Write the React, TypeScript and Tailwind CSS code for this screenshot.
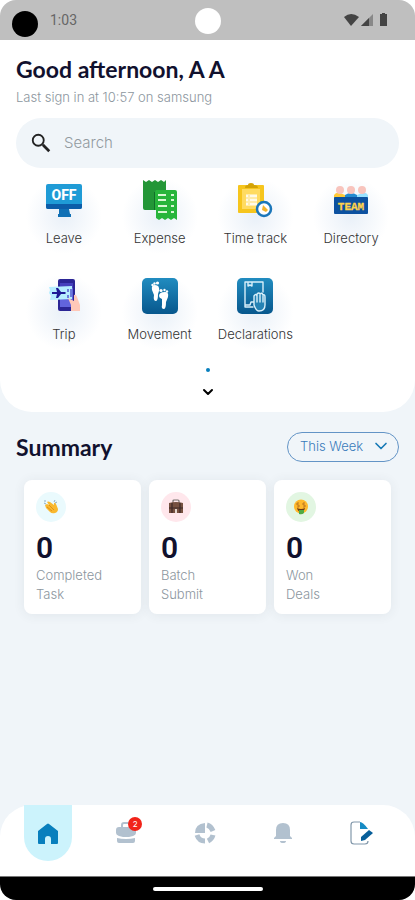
import React from 'react';
import { ChevronDown } from 'lucide-react';

const LeaveIcon = () => (
  <svg viewBox="0 0 40 40" className="h-10 w-10">
    <path d="M15 29h10l1 5h1v3H14v-3h1z" fill="#1070b5" />
    <rect x="2" y="4" width="36" height="25" rx="2" fill="#1f9bd6" />
    <path d="M2 24h36v3a2 2 0 0 1-2 2H4a2 2 0 0 1-2-2z" fill="#0c5da8" />
    <text x="20" y="20" textAnchor="middle" fontSize="14" fontWeight="800" fill="#fff" className="font-[Roboto,sans-serif]">OFF</text>
  </svg>
);

const ExpenseIcon = () => (
  <svg viewBox="0 0 40 40" className="h-10 w-10">
    <path d="M3 0l3 2 3-2 3 2 3-2 3 2 3-2 3 2 2-2v30H5a2 2 0 0 1-2-2z" fill="#239637" />
    <path d="M14 12h12v18H14z" fill="#12702a" />
    <path d="M16 10h19a2 2 0 0 1 2 2v28l-3-2-3 2-3-2-3 2-3-2-3 2-3-2V30h-1V12z" fill="#27b53b" />
    <path d="M18 15h8M18 20h8M18 26h9M18 32h9M31 15h3M31 20h3M31 26h3M31 32h3" stroke="#d8f7d4" strokeWidth="2" />
  </svg>
);

const TimeTrackIcon = () => (
  <svg viewBox="0 0 40 40" className="h-10 w-10">
    <rect x="3" y="5" width="26" height="28" rx="1" fill="#f6c51d" />
    <path d="M7 9h18v20H7z" fill="#ffdb61" />
    <path d="M10 8q0-3 3-3 0-2 3-2t3 2q4 0 4 3z" fill="#d4a306" />
    <path d="M11 14h11v12H11z" fill="#ffebaa" />
    <path d="M11 16h2M15 16h7M11 20h2M15 20h7M11 24h2M15 24h7" stroke="#fffae8" strokeWidth="2" />
    <circle cx="29" cy="29" r="7" fill="#fff" stroke="#1b76b9" strokeWidth="2.5" />
    <path d="M28 25l5 5-2 2-4-2z" fill="#f4b42b" />
  </svg>
);

const DirectoryIcon = () => (
  <svg viewBox="0 0 40 40" className="h-10 w-10">
    <path d="M3 18v-3q2-3 6-2l5 2v3z" fill="#ffc938" />
    <path d="M14 18v-3q6-4 12 0v3z" fill="#258bd0" />
    <path d="M26 18v-3l5-2q4-1 6 2v3z" fill="#99e1ff" />
    <circle cx="9" cy="10" r="4" fill="#f8c4bd" />
    <circle cx="20" cy="10" r="4" fill="#f8c4bd" />
    <circle cx="31" cy="10" r="4" fill="#f8c4bd" />
    <rect x="3" y="17" width="34" height="17" rx="1" fill="#0c51a0" />
    <text x="20" y="30" textAnchor="middle" fontSize="11" fontWeight="700" fill="#ffd34b" stroke="#ffd34b" strokeWidth=".3" className="font-['Liberation_Mono',monospace]">TEAM</text>
  </svg>
);

const TripIcon = () => (
  <svg viewBox="0 0 40 40" className="h-10 w-10">
    <rect x="14" y="3" width="17" height="32" rx="2" fill="#2b2595" />
    <path d="M16 7h13v24H16z" fill="#6264dd" />
    <path d="M16 7h13v5H16z" fill="#4540bd" />
    <path d="M5 11l23-1v13L6 24l1-4-2-3 1-3z" fill="#b6edff" />
    <path d="M8 16h5l-1-4h2l3 4h4l1 1-1 1h-4l-3 4h-2l1-4H8z" fill="#1d1995" />
    <path d="M24 13v3M24 19v3M27 13v8" stroke="#5558cd" strokeWidth="1.5" />
    <path d="M24 22l6 3V19q2-1 3 2l3 8v6H27v-6z" fill="#ffc8b8" />
  </svg>
);

const MovementIcon = () => (
  <svg viewBox="0 0 40 40" className="h-10 w-10">
    <defs>
      <linearGradient id="movement-bg" x1="0" y1="0" x2="0" y2="1">
        <stop stopColor="#218cc0" />
        <stop offset="1" stopColor="#07578d" />
      </linearGradient>
    </defs>
    <rect x="2" y="2" width="36" height="36" rx="5" fill="url(#movement-bg)" />
    <g fill="#fff">
      <path d="M12 14q-1-5 3-5 5 0 4 6l-1 3q0 7-2 7-3 0-2-6z" />
      <path d="M28 21q1-5-3-5-6 0-6 4 0 2 3 3v6q-1 4 2 4 2 0 2-7z" />
      <circle cx="12.5" cy="9" r="1.2" />
      <circle cx="14.5" cy="7.5" r="1.2" />
      <circle cx="17.5" cy="7" r="1.6" />
      <circle cx="21" cy="14.5" r="1.6" />
      <circle cx="24.5" cy="14" r="1.2" />
      <circle cx="27" cy="15.5" r="1.2" />
    </g>
  </svg>
);

const DeclarationsIcon = () => (
  <svg viewBox="0 0 40 40" className="h-10 w-10">
    <defs>
      <linearGradient id="declarations-bg" x1="0" y1="0" x2="0" y2="1">
        <stop stopColor="#218cc0" />
        <stop offset="1" stopColor="#07578d" />
      </linearGradient>
    </defs>
    <rect x="2" y="2" width="36" height="36" rx="5" fill="url(#declarations-bg)" />
    <g fill="none" stroke="#d8effa" strokeWidth="1.4" strokeLinecap="round" strokeLinejoin="round">
      <path d="M28 16V6H10v25h8M13 6v4l2-1 2 1V6M11 29h4l1-3h4" />
      <path d="M19 29v-9q2-3 3 0v-2q2-2 3 0 2-2 3 1 2-1 2 2v8q0 6-6 6-3 0-5-6zM22 20v6M25 19v7M28 20v6" fill="#2582b4" />
    </g>
  </svg>
);

const HomeIcon = () => (
  <svg viewBox="0 0 24 24" className="h-6 w-6" fill="#087fbd">
    <path d="M2 10l9-7q1-1 2 0l9 7v12q0 1-1 1h-6v-5q0-3-3-3t-3 3v5H3q-1 0-1-1z" />
  </svg>
);

const BriefcaseIcon = () => (
  <svg viewBox="0 0 24 24" className="h-6 w-6" fill="#b2c1cf">
    <path d="M7 6V4q0-3 3-3h4q3 0 3 3v2h2q3 0 3 3v3q0 2-3 3l-4 1H9l-4-1q-3-1-3-3V9q0-3 3-3zm2 0h6V4q0-1-1-1h-4q-1 0-1 1z" />
    <path d="M3 17q4 1 9 1t9-1v3q0 2-2 2H5q-2 0-2-2z" />
  </svg>
);

const ChartIcon = () => (
  <svg viewBox="0 0 24 24" className="h-6 w-6">
    <path d="M12 2v10H2q0-9 10-10z" fill="#b2c1cf" />
    <g fill="none" stroke="#b2c1cf" strokeWidth="5">
      <path d="M14 4q4 1 6 6" />
      <path d="M20 14q-1 4-5 6" />
      <path d="M12 20q-6 0-8-6" />
    </g>
  </svg>
);

const BellIcon = () => (
  <svg viewBox="0 0 24 24" className="h-6 w-6" fill="#b2c1cf">
    <path d="M5 15V9q0-7 7-7t7 7v6l2 2v1H3v-1zM9 20h6q0 2-3 2t-3-2z" />
  </svg>
);

const NoteIcon = () => (
  <svg viewBox="0 0 24 24" className="h-6 w-6" fill="none">
    <path d="M11 1H5Q2 1 2 4v16q0 3 3 3h11q3 0 3-3" stroke="#8298ab" strokeWidth="1.2" />
    <path d="M11 1q3 0 8 7h-8z" fill="#168bc4" />
    <path d="M12 20v-4l8-7 4 3-8 7z" fill="#075f9a" />
  </svg>
);

const apps = [
  { name: 'Leave', icon: <LeaveIcon /> },
  { name: 'Expense', icon: <ExpenseIcon /> },
  { name: 'Time track', icon: <TimeTrackIcon /> },
  { name: 'Directory', icon: <DirectoryIcon /> },
  { name: 'Trip', icon: <TripIcon /> },
  { name: 'Movement', icon: <MovementIcon /> },
  { name: 'Declarations', icon: <DeclarationsIcon /> },
];

const ClapIcon = () => (
  <svg viewBox="0 0 16 16" className="h-4 w-4">
    <path d="M2 6l2-1 2 1-2-3q1-1 3 0l4 3V4q1-1 2 1l2 5q0 3-3 4t-5-1L3 9z" fill="#f9b82e" />
    <path d="M4 8l5 4M6 6l5 5" stroke="#d98513" strokeWidth=".8" />
    <path d="M2 1v2M1 4l2 1M12 1l-1 2M14 3l-2 1" stroke="#8cacc3" />
  </svg>
);

const BagIcon = () => (
  <svg viewBox="0 0 16 16" className="h-4 w-4">
    <path d="M5 4V2q0-1 1-1h4q1 0 1 1v2" fill="none" stroke="#77716d" strokeWidth="1.2" />
    <path d="M1 4q7-2 14 0v10H1z" fill="#765040" />
    <path d="M4 4v10M12 4v10M1 9h14" stroke="#3d2927" strokeWidth="1.2" />
    <path d="M7 10h2v4H7z" fill="#e5d9d0" />
  </svg>
);

const MoneyFaceIcon = () => (
  <svg viewBox="0 0 16 16" className="h-4 w-4">
    <circle cx="8" cy="7.5" r="7" fill="#ffb92c" />
    <path d="M4 9q4 2 8 0-1 4-4 4T4 9z" fill="#6b3b16" />
    <path d="M6 11h5v3q-2 2-5 1z" fill="#51aa42" />
    <path d="M6 4H4v2h2v2H4M12 4h-2v2h2v2h-2" fill="none" stroke="#af671c" strokeWidth=".8" />
  </svg>
);

const stats = [
  { first: 'Completed', second: 'Task', icon: <ClapIcon />, color: 'bg-[#eafafd]' },
  { first: 'Batch', second: 'Submit', icon: <BagIcon />, color: 'bg-[#ffe7ec]' },
  { first: 'Won', second: 'Deals', icon: <MoneyFaceIcon />, color: 'bg-[#e2f6e2]' },
];

const StatusBar = () => (
  <div className="bg-white">
    <div className="relative flex h-10 items-center justify-between rounded-t-2xl bg-[#bfbfbf] px-3">
      <div className="flex items-center gap-3">
        <span className="mt-2 h-[26px] w-[26px] rounded-full bg-black" />
        <span className="font-[Roboto,sans-serif] text-sm text-[#666]">1:03</span>
      </div>
      <span className="absolute top-2 left-1/2 h-[26px] w-[26px] -translate-x-1/2 rounded-full bg-white" />
      <svg viewBox="0 0 48 16" className="mr-3 h-4 w-12" fill="#444">
        <path d="M1 5Q8-1 16 5L8 14z" />
        <path d="M18 14L30 2v12z" fill="#888" />
        <path d="M18 14l8-8v8z" />
        <path d="M37 2h2V1h3v1h2v12h-7z" />
      </svg>
    </div>
  </div>
);

const App: React.FC = () => {
  return (
    <div className="flex min-h-screen flex-col bg-[#f0f5f9] font-[Inter,sans-serif]">
      <StatusBar />

      <header className="rounded-b-[32px] bg-white px-4 pt-[15px]">
        <h1 className="font-[Lato,sans-serif] text-[23px] leading-7 font-bold text-[#11112e]">
          Good afternoon, A A
        </h1>
        <p className="mt-1 text-[13px] leading-5 font-light text-[#8c969e]">
          Last sign in at 10:57 on samsung
        </p>
        <div className="mt-[11px] flex h-[50px] items-center gap-3 rounded-full bg-[#f0f5f9] px-3.5">
          <svg viewBox="0 0 24 24" className="h-[22px] w-[22px] shrink-0" fill="none" stroke="#222" strokeWidth="2">
            <circle cx="9" cy="9" r="6" />
            <path d="M14 14l7 7" strokeWidth="3" />
          </svg>
          <input
            type="search"
            aria-label="Search"
            placeholder="Search"
            className="min-w-0 flex-1 bg-transparent text-[15px] font-light outline-none placeholder:text-[#929aa0]"
          />
        </div>

        <div className="mt-3 grid grid-cols-4 gap-y-4">
          {apps.map((app) => (
            <button key={app.name} className="flex h-20 flex-col items-center bg-[radial-gradient(circle_at_50%_45%,#e9f0f8_0,#ffffff_38px)]">
              {app.icon}
              <span className="mt-2 text-[13px] leading-5 font-light whitespace-nowrap text-[#343434]">{app.name}</span>
            </button>
          ))}
        </div>
        <div className="flex flex-col items-center pt-3 pb-3">
          <span className="h-1 w-1 rounded-full bg-[#087fbd]" />
          <button aria-label="Show more" className="mt-3">
            <ChevronDown className="h-4 w-4 text-black" strokeWidth={3} />
          </button>
        </div>
      </header>

      <main className="px-4 pt-5">
        <div className="flex items-center justify-between">
          <h2 className="font-[Lato,sans-serif] text-[23px] leading-7 font-bold text-[#11112e]">Summary</h2>
          <div className="relative">
            <select
              aria-label="Summary period"
              className="h-[30px] w-28 appearance-none rounded-full border border-[#6394c6] bg-transparent pl-3 text-[13px] font-light text-[#397bbb]"
            >
              <option>This Week</option>
            </select>
            <ChevronDown className="pointer-events-none absolute top-1 right-2 h-5 w-5 text-[#1679b6]" />
          </div>
        </div>

        <div className="mt-[18px] grid grid-cols-3 gap-2 px-2">
          {stats.map((stat) => (
            <section key={stat.first} className="rounded-lg bg-white px-3 pt-3 pb-2.5 shadow-[0_1px_12px_#30405014]">
              <span className={`flex h-[30px] w-[30px] items-center justify-center rounded-full ${stat.color}`}>
                {stat.icon}
              </span>
              <p className="mt-2 font-[Roboto,sans-serif] text-[30px] leading-9 font-semibold text-[#11112e]">0</p>
              <h3 className="text-[13px] leading-[19px] font-light text-[#8c969e]">
                {stat.first}<br />{stat.second}
              </h3>
            </section>
          ))}
        </div>
      </main>

      <nav className="mt-auto flex h-[71px] items-start justify-between rounded-t-[32px] bg-white pr-[30px] pl-6">
        <a href="#home" aria-label="Home" className="flex h-14 w-12 items-center justify-center rounded-b-full bg-[#ccf3fc]">
          <HomeIcon />
        </a>
        <a href="#tasks" aria-label="Tasks" className="relative flex h-14 w-12 items-center justify-center">
          <BriefcaseIcon />
          <span className="absolute top-3 right-2 flex h-3.5 w-3.5 items-center justify-center rounded-full bg-[#f12319] text-[8px] text-white">2</span>
        </a>
        <a href="#reports" aria-label="Reports" className="flex h-14 w-12 items-center justify-center">
          <ChartIcon />
        </a>
        <a href="#alerts" aria-label="Notifications" className="flex h-14 w-12 items-center justify-center">
          <BellIcon />
        </a>
        <a href="#notes" aria-label="Notes" className="flex h-14 w-12 items-center justify-center">
          <NoteIcon />
        </a>
      </nav>
      <div className="bg-white">
        <div className="flex h-6 items-center justify-center rounded-b-2xl border-t border-[#777] bg-black">
          <span className="h-1 w-[110px] rounded-full bg-white" />
        </div>
      </div>
    </div>
  );
};

export default App;
